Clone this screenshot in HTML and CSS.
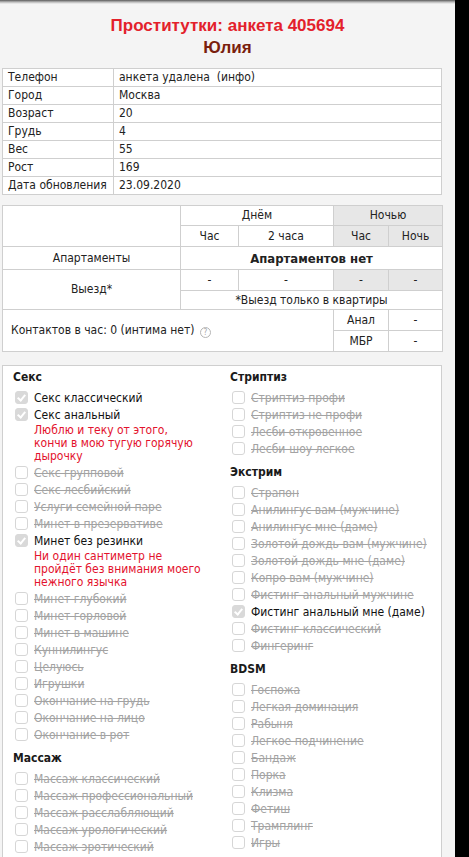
FILE: index.html
```html
<!DOCTYPE html>
<html lang="ru">
<head>
<meta charset="utf-8">
<title>Проститутки: анкета 405694 — Юлия</title>
<link rel="stylesheet" href="styles.css">
</head>
<body>
<div class="page">
  <h1 class="title">Проститутки: анкета 405694</h1>
  <h2 class="name">Юлия</h2>

  <table class="info">
    <tr><td class="label">Телефон</td><td>анкета удалена &nbsp;(инфо)</td></tr>
    <tr><td class="label">Город</td><td>Москва</td></tr>
    <tr><td class="label">Возраст</td><td>20</td></tr>
    <tr><td class="label">Грудь</td><td>4</td></tr>
    <tr><td class="label">Вес</td><td>55</td></tr>
    <tr><td class="label">Рост</td><td>169</td></tr>
    <tr><td class="label">Дата обновления</td><td>23.09.2020</td></tr>
  </table>

  <table class="prices">
    <colgroup>
      <col class="c1"><col class="c2"><col class="c3"><col class="c4"><col class="c5">
    </colgroup>
    <tr class="r-head">
      <td rowspan="2"></td>
      <td colspan="2">Днём</td>
      <td colspan="2" class="night">Ночью</td>
    </tr>
    <tr class="r-sub">
      <td>Час</td><td>2 часа</td><td class="night">Час</td><td class="night">Ночь</td>
    </tr>
    <tr class="r-apart">
      <td>Апартаменты</td>
      <td colspan="4" class="strong">Апартаментов нет</td>
    </tr>
    <tr class="r-out">
      <td rowspan="2">Выезд*</td>
      <td>-</td><td>-</td><td class="night">-</td><td class="night">-</td>
    </tr>
    <tr class="r-note">
      <td colspan="4">*Выезд только в квартиры</td>
    </tr>
    <tr class="r-extra">
      <td colspan="3" rowspan="2" class="contacts">Контактов в час: 0 (интима нет) <span class="help">?</span></td>
      <td>Анал</td><td>-</td>
    </tr>
    <tr class="r-extra">
      <td>МБР</td><td>-</td>
    </tr>
  </table>

  <div class="services">
    <div class="col">
      <div class="group">
        <div class="group-title">Секс</div>
        <div class="item on"><span class="box"></span>Секс классический</div>
        <div class="item on"><span class="box"></span>Секс анальный</div>
        <div class="note">Люблю и теку от этого, кончи в мою тугую горячую дырочку</div>
        <div class="item"><span class="box"></span>Секс групповой</div>
        <div class="item"><span class="box"></span>Секс лесбийский</div>
        <div class="item"><span class="box"></span>Услуги семейной паре</div>
        <div class="item"><span class="box"></span>Минет в презервативе</div>
        <div class="item on"><span class="box"></span>Минет без резинки</div>
        <div class="note">Ни один сантиметр не пройдёт без внимания моего нежного язычка</div>
        <div class="item"><span class="box"></span>Минет глубокий</div>
        <div class="item"><span class="box"></span>Минет горловой</div>
        <div class="item"><span class="box"></span>Минет в машине</div>
        <div class="item"><span class="box"></span>Куннилингус</div>
        <div class="item"><span class="box"></span>Целуюсь</div>
        <div class="item"><span class="box"></span>Игрушки</div>
        <div class="item"><span class="box"></span>Окончание на грудь</div>
        <div class="item"><span class="box"></span>Окончание на лицо</div>
        <div class="item"><span class="box"></span>Окончание в рот</div>
      </div>
      <div class="group">
        <div class="group-title">Массаж</div>
        <div class="item"><span class="box"></span>Массаж классический</div>
        <div class="item"><span class="box"></span>Массаж профессиональный</div>
        <div class="item"><span class="box"></span>Массаж расслабляющий</div>
        <div class="item"><span class="box"></span>Массаж урологический</div>
        <div class="item"><span class="box"></span>Массаж эротический</div>
      </div>
    </div>
    <div class="col">
      <div class="group">
        <div class="group-title">Стриптиз</div>
        <div class="item"><span class="box"></span>Стриптиз профи</div>
        <div class="item"><span class="box"></span>Стриптиз не профи</div>
        <div class="item"><span class="box"></span>Лесби откровенное</div>
        <div class="item"><span class="box"></span>Лесби-шоу легкое</div>
      </div>
      <div class="group">
        <div class="group-title">Экстрим</div>
        <div class="item"><span class="box"></span>Страпон</div>
        <div class="item"><span class="box"></span>Анилингус вам (мужчине)</div>
        <div class="item"><span class="box"></span>Анилингус мне (даме)</div>
        <div class="item"><span class="box"></span>Золотой дождь вам (мужчине)</div>
        <div class="item"><span class="box"></span>Золотой дождь мне (даме)</div>
        <div class="item"><span class="box"></span>Копро вам (мужчине)</div>
        <div class="item"><span class="box"></span>Фистинг анальный мужчине</div>
        <div class="item on"><span class="box"></span>Фистинг анальный мне (даме)</div>
        <div class="item"><span class="box"></span>Фистинг классический</div>
        <div class="item"><span class="box"></span>Фингеринг</div>
      </div>
      <div class="group">
        <div class="group-title">BDSM</div>
        <div class="item"><span class="box"></span>Госпожа</div>
        <div class="item"><span class="box"></span>Легкая доминация</div>
        <div class="item"><span class="box"></span>Рабыня</div>
        <div class="item"><span class="box"></span>Легкое подчинение</div>
        <div class="item"><span class="box"></span>Бандаж</div>
        <div class="item"><span class="box"></span>Порка</div>
        <div class="item"><span class="box"></span>Клизма</div>
        <div class="item"><span class="box"></span>Фетиш</div>
        <div class="item"><span class="box"></span>Трамплинг</div>
        <div class="item"><span class="box"></span>Игры</div>
      </div>
    </div>
  </div>
</div>
</body>
</html>
```

FILE: styles.css
```css
html, body {
  margin: 0;
  padding: 0;
  background: #000;
  height: 100%;
  overflow: hidden;
}

.page {
  width: 455px;
  min-height: 100%;
  background: #f4f4f4 linear-gradient(#5a5a5a, #b8b8b8 2px, #f4f4f4 4px) no-repeat top left / 100% 4px;
  padding: 0 0 0 2px;
  box-sizing: border-box;
  font-family: "DejaVu Sans Condensed", "DejaVu Sans", Verdana, sans-serif;
  font-size: 12px;
  color: #222;
}

.title {
  margin: 0;
  padding-top: 16px;
  text-align: center;
  font-family: "Liberation Sans", Arial, sans-serif;
  font-size: 17px;
  line-height: 20px;
  font-weight: bold;
  color: #e3212b;
  width: 451px;
}

.name {
  margin: 2px 0 0;
  text-align: center;
  font-family: "Liberation Sans", Arial, sans-serif;
  font-size: 17px;
  line-height: 20px;
  font-weight: bold;
  color: #7a1f0e;
  width: 451px;
}

table {
  border-collapse: collapse;
  background: #fff;
  width: 440px;
}

td {
  border: 1px solid #cfcfcf;
  padding: 0 5px;
  white-space: nowrap;
}

.info {
  margin-top: 10px;
}

.info td {
  height: 17px;
  line-height: 15px;
}

.info .label {
  width: 100px;
}

.prices {
  margin-top: 10px;
  table-layout: fixed;
  text-align: center;
}

.prices .c1 { width: 178px; }
.prices .c2 { width: 58px; }
.prices .c3 { width: 95px; }
.prices .c4 { width: 55px; }
.prices .c5 { width: 54px; }

.prices td {
  line-height: 15px;
  padding: 0 3px;
}

.prices .r-head td { height: 19px; }
.prices .r-sub td { height: 20px; }
.prices .r-apart td { height: 22px; }
.prices .r-out td { height: 20px; }
.prices .r-note td { height: 18px; }
.prices .r-extra td { height: 20px; }

.prices .night {
  background: #e7e7e7;
}

.prices .strong {
  font-weight: bold;
  font-size: 13px;
}

.prices .contacts {
  text-align: left;
  padding-left: 8px;
}

.help {
  display: inline-block;
  width: 9px;
  height: 9px;
  border: 1px solid #b5b5b5;
  border-radius: 50%;
  font-size: 8px;
  line-height: 9px;
  text-align: center;
  color: #a8a8a8;
  vertical-align: -1px;
  margin-left: 2px;
}

.services {
  margin-top: 13px;
  width: 440px;
  box-sizing: border-box;
  border: 1px solid #cfcfcf;
  background: #fff;
  padding: 3px 0 12px 10px;
  display: grid;
  grid-template-columns: 217px 1fr;
}

.group + .group {
  margin-top: 7px;
}

.group-title {
  font-weight: bold;
  font-size: 12px;
  line-height: 17px;
  margin-bottom: 3px;
  color: #1a1a1a;
}

.item {
  display: flex;
  align-items: center;
  height: 17px;
  padding-left: 2px;
  color: #a3a3a3;
  text-decoration: line-through;
  white-space: nowrap;
}

.item.on {
  color: #111;
  text-decoration: none;
}

.box {
  flex: none;
  width: 11px;
  height: 11px;
  border: 1px solid #d6d6d6;
  border-radius: 3px;
  background: #fff;
  margin-right: 6px;
  position: relative;
}

.item.on .box {
  background: #d9d9d9;
  border-color: #d9d9d9;
}

/* white tick inside a ticked box */
.item.on .box::after {
  content: "";
  position: absolute;
  left: 3px;
  top: 1px;
  width: 3px;
  height: 6px;
  border: solid #fff;
  border-width: 0 2px 2px 0;
  transform: rotate(40deg);
}

.note {
  margin: 1px 0 1px 21px;
  width: 167px;
  color: #e3122d;
  line-height: 13px;
}
```
